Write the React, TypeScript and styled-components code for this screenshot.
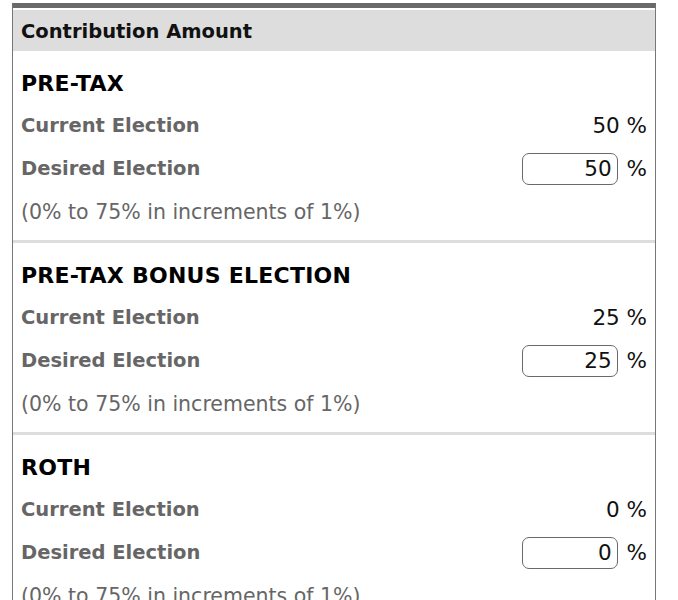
import React from "react";
import styled, { createGlobalStyle } from "styled-components";

const GlobalStyle = createGlobalStyle`
  html, body { margin: 0; padding: 0; background: #ffffff; }
  body { font-family: "DejaVu Sans", Verdana, sans-serif; }
`;

const Page = styled.div`
  padding: 3px 22px 0 12px;
`;

const Panel = styled.div`
  border-top: 5px solid #6a6a6a;
  border-left: 1px solid #777777;
  border-right: 1px solid #777777;
  padding-top: 2px;
`;

const Header = styled.div`
  height: 41px;
  background: #dddddd;
  display: flex;
  align-items: center;
  padding: 1px 0 0 8px;
  box-sizing: border-box;
  font-size: 19.5px;
  font-weight: bold;
  color: #111111;
`;

const Section = styled.div`
  padding: 11px 8px 7px 8px;
  border-bottom: 3px solid #dddddd;
`;

const Title = styled.div`
  height: 42px;
  display: flex;
  align-items: center;
  font-size: 22px;
  letter-spacing: 0.25px;
  font-weight: bold;
  color: #000000;
`;

const Row = styled.div`
  height: 43px;
  display: flex;
  align-items: center;
  justify-content: space-between;
`;

const Label = styled.span`
  font-size: 19.5px;
  font-weight: bold;
  color: #666666;
`;

const Value = styled.span`
  font-size: 21.5px;
  color: #111111;
  display: flex;
  align-items: center;
  gap: 9px;
`;

const Input = styled.input`
  box-sizing: border-box;
  width: 96px;
  height: 32px;
  border: 1px solid #6a6a6a;
  border-radius: 7px;
  padding: 0 5px 0 4px;
  text-align: right;
  font-family: "DejaVu Sans", Verdana, sans-serif;
  font-size: 21.5px;
  color: #111111;
  background: #ffffff;
  outline: none;
`;

const Hint = styled.span`
  font-size: 20.5px;
  color: #666666;
`;

type Plan = { name: string; current: number; desired: number };

const plans: Plan[] = [
  { name: "PRE-TAX", current: 50, desired: 50 },
  { name: "PRE-TAX BONUS ELECTION", current: 25, desired: 25 },
  { name: "ROTH", current: 0, desired: 0 },
];

export default function App() {
  return (
    <>
      <GlobalStyle />
      <Page>
        <Panel>
          <Header>Contribution Amount</Header>
          {plans.map((p) => (
            <Section key={p.name}>
              <Title>{p.name}</Title>
              <Row>
                <Label>Current Election</Label>
                <Value>{p.current} %</Value>
              </Row>
              <Row>
                <Label>Desired Election</Label>
                <Value>
                  <Input type="text" defaultValue={String(p.desired)} />
                  %
                </Value>
              </Row>
              <Row>
                <Hint>(0% to 75% in increments of 1%)</Hint>
              </Row>
            </Section>
          ))}
        </Panel>
      </Page>
    </>
  );
}
